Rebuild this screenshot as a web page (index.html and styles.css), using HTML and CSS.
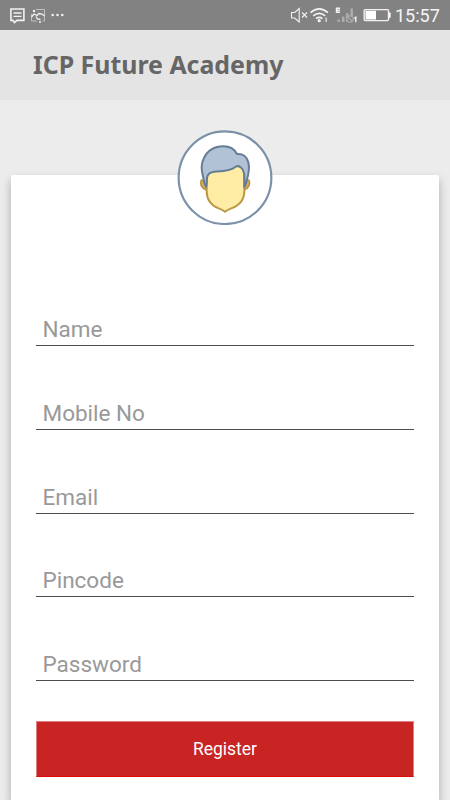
FILE: index.html
```html
<!DOCTYPE html>
<html lang="en">
<head>
  <meta charset="UTF-8" />
  <meta name="viewport" content="width=device-width, initial-scale=1" />
  <title>ICP Future Academy</title>
  <link rel="stylesheet" href="styles.css">
</head>
<body>
  <div class="status-bar">
    <svg class="notifications" width="66" height="30" viewBox="0 0 66 30" fill="none" stroke="#f2f2f2">
      <!-- message -->
      <path stroke-width="1.600" d="M10.900 9h13v11.400h-7l-2.400 2.100-1.600-2.100h-2z" />
      <path stroke-width="1.300" d="M13.500 13h8M13.500 16.300h8" />
      <!-- picture -->
      <path stroke="#c0c0c0" stroke-width="1" d="M36 9.500h8.500v11.500h-2M37 21h-5.500v-7" />
      <path stroke-width="1.300" d="M31.500 17l2.500-3 3 1.500 2-2 3 .500 2.500 2M36 16.500l1.500 2.500 3 .500M39 22h2" />
      <circle cx="34" cy="11" r="1.200" fill="#f2f2f2" stroke="none" />
      <!-- more -->
      <g fill="#f2f2f2" stroke="none">
        <circle cx="52.700" cy="15" r="1.250" />
        <circle cx="57.500" cy="15" r="1.250" />
        <circle cx="62.300" cy="15" r="1.250" />
      </g>
    </svg>
    <div class="status-right">
      <svg width="102" height="30" viewBox="0 0 102 30" fill="none" stroke="#f2f2f2">
        <!-- muted -->
        <path stroke-width="1.100" d="M2.500 12.500h3.200l4.500-4v13.500l-4.500-4H2.500z" />
        <path stroke-width="1.100" d="M13 12.500l5 5M18 12.500l-5 5" />
        <!-- wifi -->
        <path stroke-width="1.700" d="M21.500 12.700q8.700-7.500 17.400 0M24.200 15.900q6-5 12 0M27 18.700q3.200-2.500 6.400 0" />
        <circle cx="30.200" cy="20.700" r="1.600" fill="#f2f2f2" stroke="none" />
        <path stroke="#d0d0d0" stroke-width="1.600" d="M37.200 17.500v4.500" />
        <!-- mobile signal -->
        <path stroke-width="1.400" d="M51 8.200h-3.500v4H51M47.500 10.200H51" />
        <g stroke="#adadad" stroke-width="2.500">
          <path d="M49.700 19.500v2.500M54.200 16.500V22M58.300 13V22M62.700 8.500V22" />
          <circle cx="61" cy="19" r="3.200" fill="#828282" stroke-width="1.200" />
          <path stroke-width="1.200" d="M58.700 17l4.600 4" />
        </g>
        <path stroke-width="1.400" d="M65.300 18.300l1.500-1V22.300" />
        <!-- battery -->
        <rect x="75.200" y="9.600" width="24.300" height="11" rx="1" stroke-width="1.400" />
        <path fill="#fff" stroke="none" d="M76.500 10.800H87v8.600H76.500zM100 12.500h1.600v5.300H100z" />
      </svg>
      <span class="clock">15:57</span>
    </div>
  </div>

  <header class="app-bar">
    <h1>ICP Future Academy</h1>
  </header>

  <main class="card">
    <svg class="avatar" viewBox="36 29 288 285" stroke-linejoin="round">
      <circle cx="180" cy="172" r="139" fill="#fff" stroke="#7b91a8" stroke-width="6.500" />
      <!-- ears -->
      <path fill="#dbb151" stroke="#b6944c" stroke-width="5" d="M109 179c-4 11-1 23 15 30v-24zM252 179c4 11 1 23-15 30v-24z" />
      <!-- face -->
      <path fill="#ffeda5" stroke="#bb9846" stroke-width="6" d="M125 150v62c0 28 15 44 36 52 8 3 13 5 19 10 6-5 11-7 19-10 22-8 39-24 39-52v-67l-27-10z" />
      <!-- hair -->
      <path fill="#b1c1d6" stroke="#657c95" stroke-width="6" d="M123 200c-7-10-6-22-9-32-5-18-7-35 2-53 11-24 34-37 60-37 18 0 32 8 40 23 17-2 30 8 34 25 5 20 0 39-5 55-2 7-2 14-7 19v-36c-2-12-6-20-12-24-5-4-11-3-16 1-16 13-39 12-62 13-13 1-20 6-22 18-1 10 0 20-3 28z" />
    </svg>

    <form>
      <input type="text" name="name" placeholder="Name" />
      <input type="tel" name="mobile" placeholder="Mobile No" />
      <input type="email" name="email" placeholder="Email" />
      <input type="text" name="pincode" placeholder="Pincode" />
      <input type="password" name="password" placeholder="Password" />
      <button type="submit">Register</button>
    </form>
  </main>
</body>
</html>
```

FILE: styles.css
```css
* {
  box-sizing: border-box;
}
body {
  display: flex;
  flex-direction: column;
  margin: 0;
  height: 100vh;
  background: #ececec;
  font-family: Roboto, sans-serif;
}
.status-bar {
  display: flex;
  justify-content: space-between;
  height: 30px;
  padding-right: 10px;
  background: #828282;
}
.status-bar svg {
  display: block;
}
.status-right {
  display: flex;
}
.clock {
  width: 45px;
  margin-left: 4px;
  color: #f5f5f5;
  font-size: 18px;
  line-height: 32px;
  white-space: nowrap;
}
.app-bar {
  height: 70px;
  padding-left: 33px;
  background: #e4e4e4;
}
h1 {
  margin: 0;
  color: #666;
  font-family: "Noto Sans", sans-serif;
  font-size: 24.9px;
  font-weight: bold;
  line-height: 69px;
}
.card {
  flex: 1;
  margin: 75px 11px 0;
  padding: 0 25px;
  background: #fff;
  border-radius: 2px 2px 0 0;
  box-shadow: 0 5px 10px rgba(0,0,0,0.28);
}
.avatar {
  display: block;
  width: 96px;
  height: 95px;
  margin: 0 auto;
  /* overlaps the top edge of the card */
  transform: translateY(-45px);
}
form {
  display: flex;
  flex-direction: column;
  gap: 43.75px;
  padding-top: 36px;
}
input {
  width: 100%;
  height: 40px;
  padding: 7px 6px 0 6.5px;
  border: none;
  border-bottom: 1px solid #4d4d4d;
  border-radius: 0;
  outline: none;
  background: transparent;
  font-family: inherit;
  font-size: 22.5px;
}
input::placeholder {
  color: #999;
  opacity: 1;
}
button {
  width: 100%;
  height: 56px;
  margin-top: -3.5px;
  border: 1px solid #e08080;
  border-bottom-color: #e00a0a;
  background: #c92424;
  color: #fff;
  font-family: inherit;
  font-size: 17.5px;
}
```
